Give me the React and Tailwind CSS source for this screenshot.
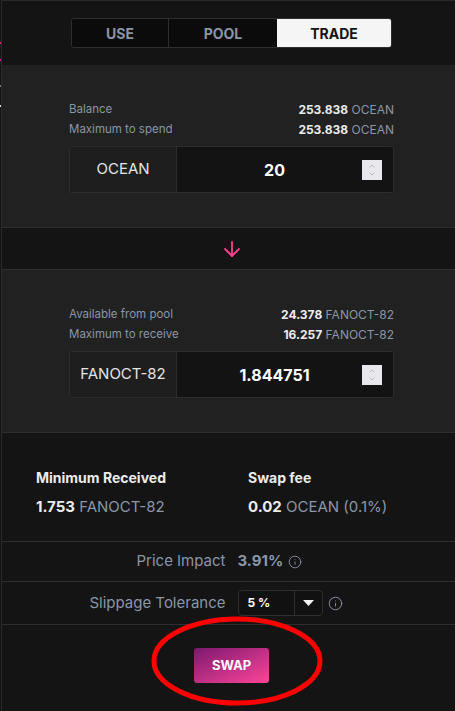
import { ChevronUp, ChevronDown, ArrowDown, Info } from "lucide-react";

const font = { fontFamily: "Inter, 'Noto Sans', sans-serif" };

const InfoRow = ({ label, value, unit }) => (
  <div className="flex items-center justify-between h-5">
    <span className="text-[11.5px] text-[#8b96a6]">{label}</span>
    <span className="text-[12px]">
      <span className="font-bold text-[#ececec]">{value}</span>{" "}
      <span className="text-[#8b96a6]">{unit}</span>
    </span>
  </div>
);

const AmountInput = ({ token, value }) => (
  <div className="flex h-[47px] border border-[#2c2c2c] rounded-[3px] overflow-hidden mt-[6px]">
    <div className="w-[107px] flex items-center justify-center bg-[#1e1e1e] border-r border-[#2c2c2c] text-[15px] text-[#e4e4e4]">
      {token}
    </div>
    <div className="flex-1 flex items-center bg-[#131313] pr-[11px]">
      <span className="flex-1 text-center pl-[10px] text-[16px] font-bold text-white">{value}</span>
      <div className="w-5 h-5 bg-[#e8e7ec] flex flex-col items-center justify-center text-[#8a8a94]">
        <ChevronUp className="w-[10px] h-[8px]" strokeWidth={1.5} />
        <ChevronDown className="w-[10px] h-[8px]" strokeWidth={1.5} />
      </div>
    </div>
  </div>
);

export default function App() {
  return (
    <div className="flex bg-[#141414] min-h-[711px] overflow-hidden" style={font}>
      <div className="w-px flex flex-col shrink-0">
        <span className="mt-[42px] h-[2px] bg-[#e0218a]" />
        <span className="mt-[15px] h-[2px] bg-[#e0218a]" />
        <span className="mt-[24px] h-[2px] bg-[#6f7f99]" />
        <span className="mt-[18px] h-[2px] bg-[#dddddd]" />
      </div>
      <div className="relative w-[460px] shrink-0 border-l border-t border-[#2a2a2a] bg-[#141414]">
        {/* tabs */}
        <div className="h-[64px] flex justify-center pt-[17px]">
          <div className="flex w-[321px] h-[30px] border border-[#2e2e2e] rounded-[3px] overflow-hidden text-[14px] font-bold">
            <div className="w-[97px] flex items-center justify-center bg-[#0b0b0b] text-[#8a95a5] border-r border-[#2e2e2e]">USE</div>
            <div className="w-[108px] flex items-center justify-center bg-[#0b0b0b] text-[#8a95a5]">POOL</div>
            <div className="flex-1 flex items-center justify-center bg-[#f5f5f5] text-[#141414]">TRADE</div>
          </div>
        </div>

        {/* spend */}
        <div className="bg-[#212121] h-[162px] pt-[35px]">
          <div className="w-[325px] mx-auto">
            <InfoRow label="Balance" value="253.838" unit="OCEAN" />
            <InfoRow label="Maximum to spend" value="253.838" unit="OCEAN" />
            <AmountInput token="OCEAN" value="20" />
          </div>
        </div>

        <div className="h-[43px] border-y border-[#2e2e2e] flex items-center justify-center">
          <ArrowDown className="w-6 h-6 text-[#ff4092]" strokeWidth={1.8} />
        </div>

        {/* receive */}
        <div className="bg-[#212121] h-[162px] pt-[35px]">
          <div className="w-[325px] mx-auto">
            <InfoRow label="Available from pool" value="24.378" unit="FANOCT-82" />
            <InfoRow label="Maximum to receive" value="16.257" unit="FANOCT-82" />
            <AmountInput token="FANOCT-82" value="1.844751" />
          </div>
        </div>

        {/* summary */}
        <div className="h-[109px] border-t border-[#2e2e2e] flex pl-[34px] pt-[34px]">
          <div className="w-[212px]">
            <div className="text-[14px] font-bold text-[#ececec]">Minimum Received</div>
            <div className="mt-[8px] text-[15px]">
              <span className="font-bold text-[#ececec]">1.753</span>{" "}
              <span className="text-[#8b96a6]">FANOCT-82</span>
            </div>
          </div>
          <div>
            <div className="text-[14px] font-bold text-[#ececec]">Swap fee</div>
            <div className="mt-[8px] text-[15px]">
              <span className="font-bold text-[#ececec]">0.02</span>{" "}
              <span className="text-[#8b96a6]">OCEAN (0.1%)</span>
            </div>
          </div>
        </div>

        <div className="h-[40px] border-t border-[#2e2e2e] grid grid-cols-2 gap-[12px] items-center text-[15px]">
          <span className="text-right text-[#8b96a6]">Price Impact</span>
          <span className="flex items-center gap-[5px] text-[#8b96a6]">
            <span className="font-bold">3.91%</span>
            <Info className="w-[14px] h-[14px]" strokeWidth={1.5} />
          </span>
        </div>

        <div className="h-[44px] border-y border-[#2e2e2e] grid grid-cols-2 gap-[12px] items-center text-[15px]">
          <span className="text-right text-[#8b96a6]">Slippage Tolerance</span>
          <span className="flex items-center gap-[5px]">
            <span className="flex w-[85px] h-[26px] border border-[#2e2e2e] rounded-[4px] bg-[#111]">
              <span className="flex-1 flex items-center pl-[9px] text-[12px] font-bold text-white">5 %</span>
              <span className="w-[28px] border-l border-[#2e2e2e] flex items-center justify-center">
                <svg width="11" height="6" viewBox="0 0 11 6"><path d="M0 0h11L5.5 6z" fill="#f2f2f2" /></svg>
              </span>
            </span>
            <Info className="w-[15px] h-[15px] text-[#8b96a6]" strokeWidth={1.5} />
          </span>
        </div>

        <div className="flex justify-center pt-[23px]">
          <button className="w-[75px] h-[35px] rounded-[3px] bg-gradient-to-br from-[#7e176f] to-[#ff4598] text-white text-[13px] font-bold">
            SWAP
          </button>
        </div>

        <svg className="absolute left-[148px] top-[614px] pointer-events-none" width="174" height="92" viewBox="0 0 174 92">
          <ellipse cx="87" cy="46" rx="83" ry="42" fill="none" stroke="#ff0000" strokeWidth="5" />
        </svg>
      </div>
    </div>
  );
}
